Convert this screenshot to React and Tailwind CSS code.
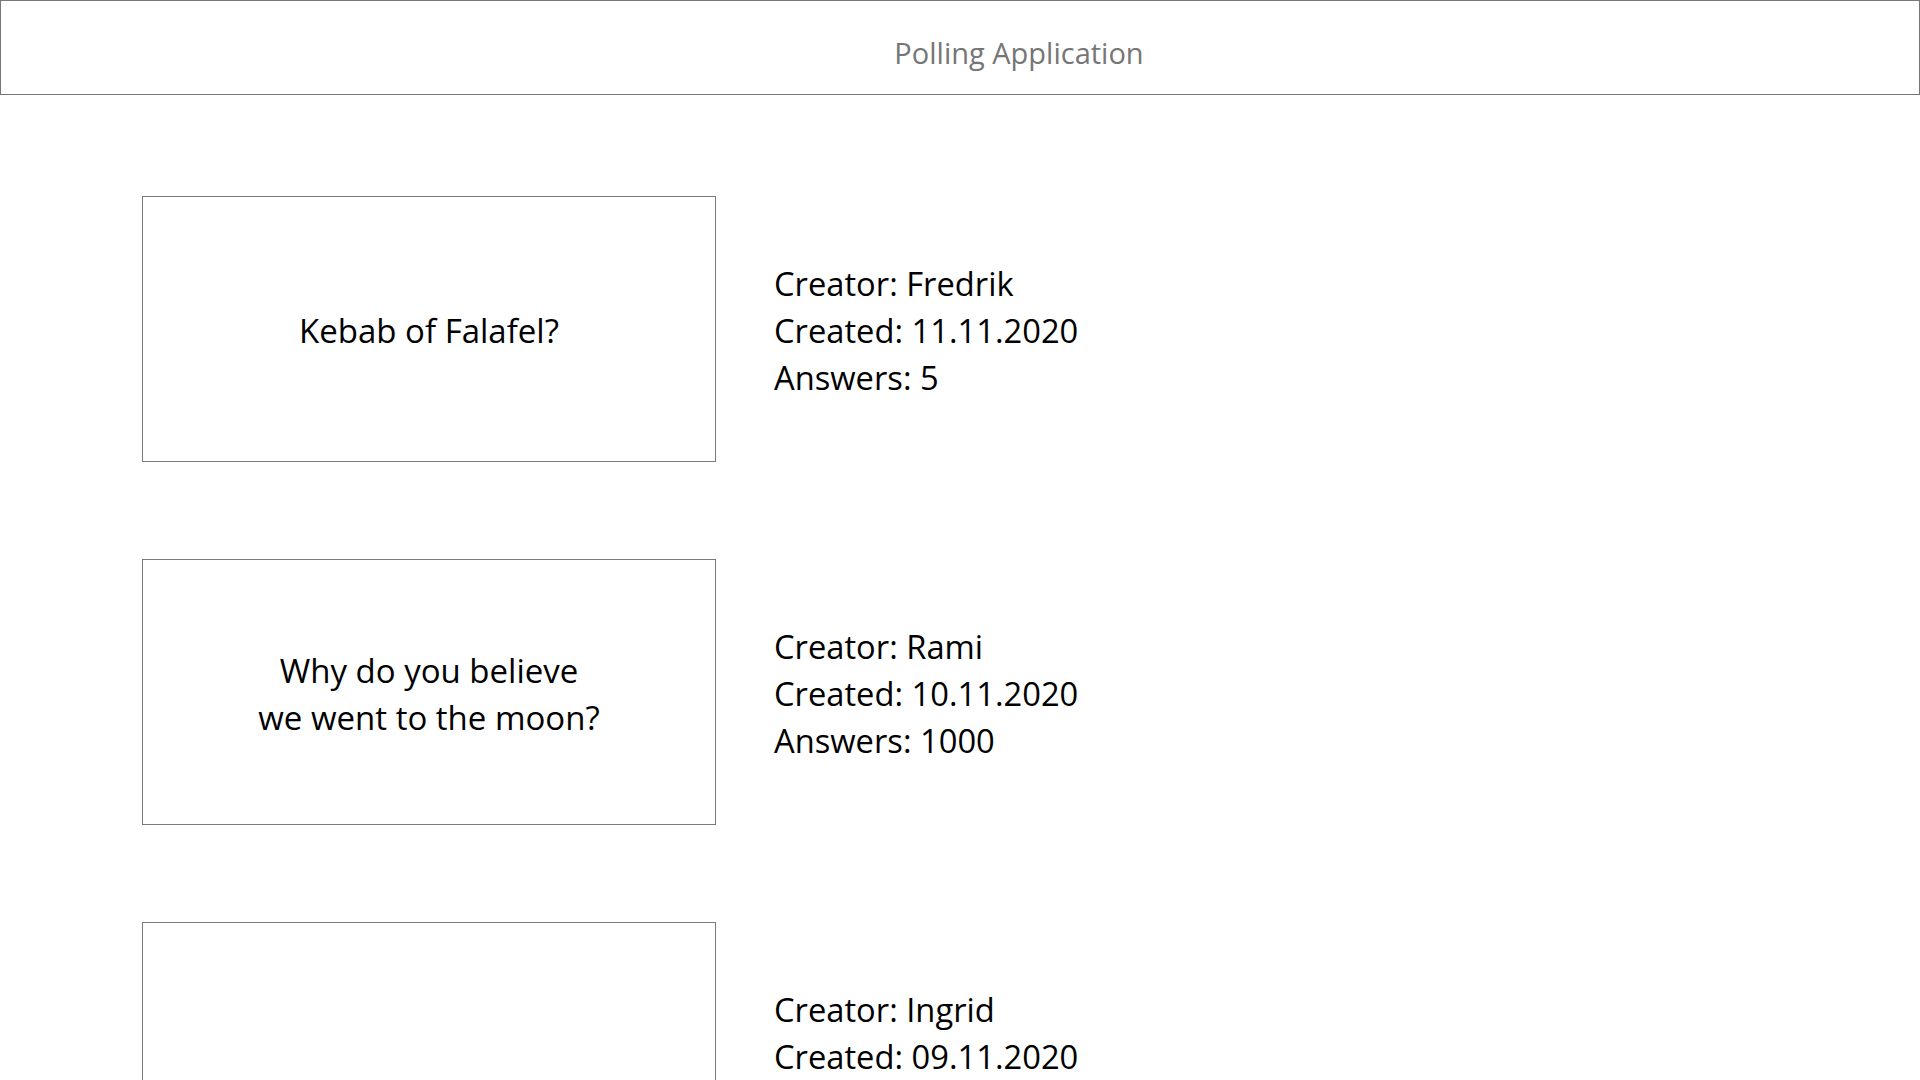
export default function App() {
  const polls = [
    { q: ["Kebab of Falafel?"], creator: "Fredrik", created: "11.11.2020", answers: "5" },
    { q: ["Why do you believe", "we went to the moon?"], creator: "Rami", created: "10.11.2020", answers: "1000" },
    { q: [], creator: "Ingrid", created: "09.11.2020", answers: "42" },
  ];
  return (
    <div className="min-h-screen bg-white text-black" style={{ fontFamily: '"Open Sans", "Noto Sans", sans-serif' }}>
      <header className="h-[95px] border border-[#767676] flex items-center justify-center pl-[118px] pt-[10px]">
        <h1 className="text-[29px] text-[#767676] font-normal leading-none">Polling Application</h1>
      </header>
      <main className="flex flex-col gap-[97px] pt-[101px] pl-[142px]">
        {polls.map((p, i) => (
          <div key={i} className="flex items-center gap-[58px]">
            <div className="w-[574px] h-[266px] border border-[#7a7a7a] flex flex-col items-center justify-center text-[33px] leading-[47px] text-center pt-[3px]">
              {p.q.map((l, j) => <div key={j}>{l}</div>)}
            </div>
            <div className="text-[32.7px] leading-[47px] pt-[3px]">
              <div>Creator: {p.creator}</div>
              <div>Created: {p.created}</div>
              <div>Answers: {p.answers}</div>
            </div>
          </div>
        ))}
      </main>
    </div>
  );
}
